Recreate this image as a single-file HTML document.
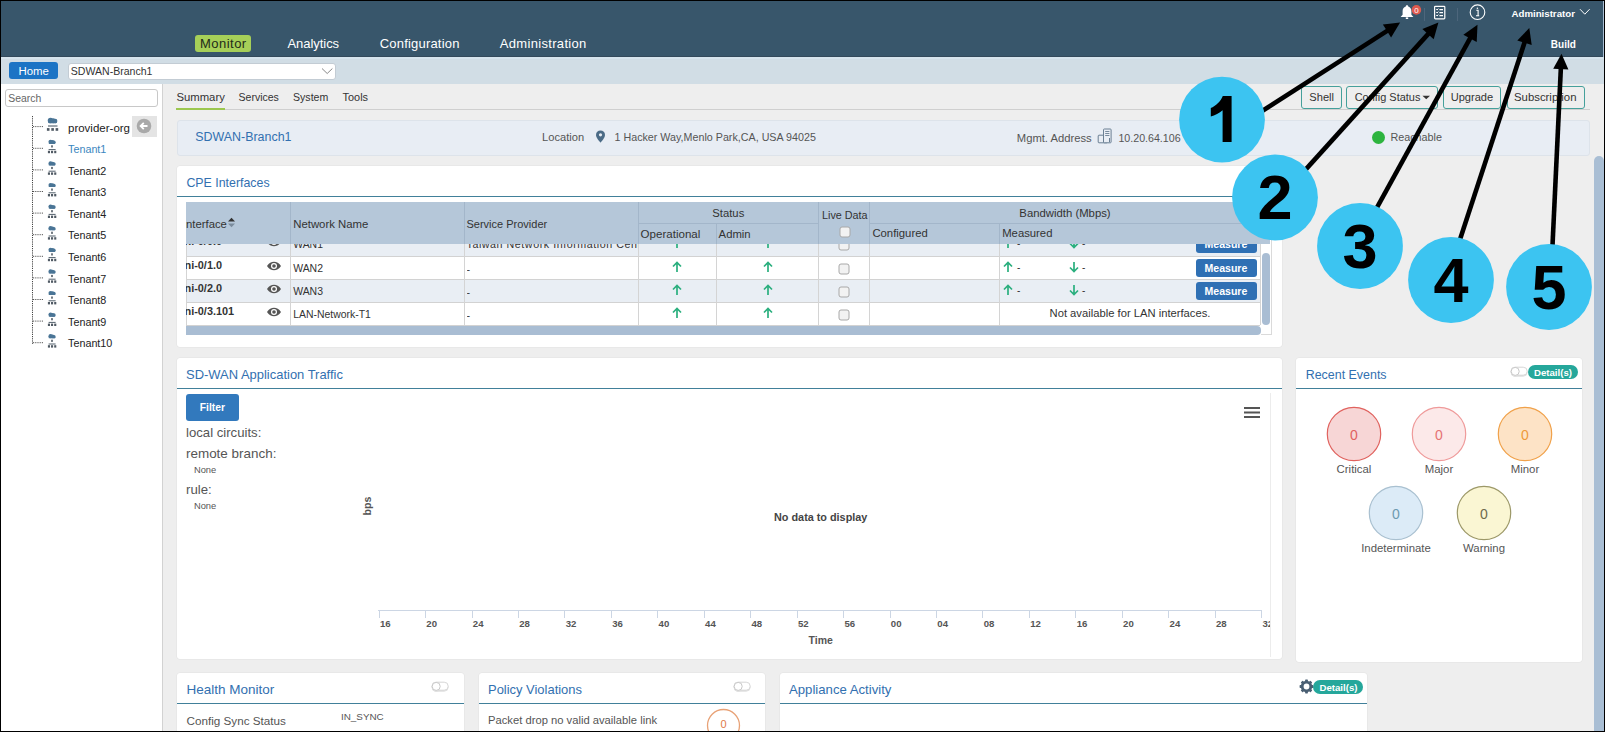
<!DOCTYPE html>
<html><head><meta charset="utf-8"><title>SD-WAN Monitor</title>
<style>
html,body{margin:0;padding:0;}
body{width:1605px;height:732px;overflow:hidden;position:relative;background:#eee;font-family:"Liberation Sans",sans-serif;}
.r{position:absolute;display:block;}
.t{position:absolute;white-space:nowrap;line-height:20px;height:20px;font-family:"Liberation Sans",sans-serif;}
svg{overflow:visible;}
</style></head><body>
<div class="r" style="left:0px;top:0px;width:1605px;height:57px;background:#38566b"></div>
<div class="r" style="left:0px;top:57px;width:1605px;height:27px;background:#d1dde5"></div>
<div class="r" style="left:0px;top:56px;width:1605px;height:1px;background:#33495b"></div>
<div class="r" style="left:0px;top:57px;width:1605px;height:2px;background:#d6e4ed"></div>
<div class="r" style="left:0px;top:84px;width:162px;height:648px;background:#fff"></div>
<div class="r" style="left:162px;top:84px;width:1px;height:648px;background:#d2d2d2"></div>
<div class="r" style="left:163px;top:84px;width:1442px;height:648px;background:#eeeeee"></div>
<div class="r" style="left:195px;top:35px;width:56px;height:17px;background:#a6cf58;border-radius:3px"></div>
<div class="t" style="left:200.00px;top:34.44px;font-size:13px;color:#1f2b18;font-weight:400;letter-spacing:0.47px">Monitor</div>
<div class="t" style="left:287.50px;top:34.44px;font-size:13px;color:#fff;font-weight:400;letter-spacing:-0.05px">Analytics</div>
<div class="t" style="left:379.70px;top:34.44px;font-size:13px;color:#fff;font-weight:400;letter-spacing:0.2px">Configuration</div>
<div class="t" style="left:499.70px;top:34.44px;font-size:13px;color:#fff;font-weight:400;letter-spacing:0.33px">Administration</div>
<svg class="r" style="left:1399px;top:4px;" width="16" height="17" viewBox="0 0 16 17"><path d="M8 1.2c-0.8 0-1.2 0.6-1.2 1.2C4.6 3 3.6 4.8 3.6 7.2v3.6L1.6 13h12.8l-2-2.2V7.2c0-2.4-1-4.2-3.2-4.8C9.2 1.8 8.8 1.2 8 1.2z" fill="#fff"/><rect x="6.8" y="13.4" width="2.4" height="1.6" fill="#fff"/></svg>
<svg class="r" style="left:1411px;top:5px;" width="11" height="10" viewBox="0 0 11 10"><circle cx="5.4" cy="4.9" r="4.8" fill="#e05a4e"/><text x="5.4" y="8" font-size="8" fill="#fff" text-anchor="middle" font-family="Liberation Sans">0</text></svg>
<div class="r" style="left:1423.5px;top:8px;width:0.7999999999999545px;height:13px;background:#4d667c"></div>
<svg class="r" style="left:1433px;top:5px;" width="14" height="16" viewBox="0 0 14 16"><rect x="1.6" y="1.3" width="10.2" height="12.6" rx="0.8" fill="none" stroke="#fff" stroke-width="1.2"/><path d="M3.2 4.2l0.9 0.8 1.2-1.4M3.2 7.2l0.9 0.8 1.2-1.4M3.2 10.2l0.9 0.8 1.2-1.4" stroke="#fff" stroke-width="1" fill="none"/><path d="M6.4 4.6h3.6M6.4 7.6h3.6M6.4 10.6h3.6" stroke="#fff" stroke-width="1.1"/></svg>
<div class="r" style="left:1456.5px;top:8px;width:0.7999999999999545px;height:13px;background:#4d667c"></div>
<svg class="r" style="left:1469px;top:4px;" width="17" height="17" viewBox="0 0 17 17"><circle cx="8.5" cy="8.2" r="7.3" fill="none" stroke="#fff" stroke-width="1.1"/><path d="M7.3 6.2h1.8v5.6M7 11.8h3.2" stroke="#fff" stroke-width="1.1" fill="none"/><circle cx="8.4" cy="4.2" r="0.8" fill="#fff"/></svg>
<div class="t" style="left:1511.50px;top:3.69px;font-size:9.69px;color:#fff;font-weight:700;">Administrator</div>
<svg class="r" style="left:1579px;top:8px;" width="12" height="8" viewBox="0 0 12 8"><path d="M1 1.2l4.8 5 4.8-5" stroke="#fff" stroke-width="1" fill="none"/></svg>
<div class="t" style="left:1550.80px;top:34.98px;font-size:10px;color:#fff;font-weight:700;">Build</div>
<div class="r" style="left:9px;top:62px;width:49px;height:17px;background:#1c74c5;border-radius:3px"></div>
<div class="t" style="left:18.50px;top:61.49px;font-size:11.43px;color:#fff;font-weight:400;">Home</div>
<div class="r" style="left:68px;top:62.5px;width:268px;height:17.0px;background:#fff;border:1px solid #c3ccd4;border-radius:3px;box-sizing:border-box"></div>
<div class="t" style="left:70.80px;top:60.79px;font-size:10.55px;color:#333;font-weight:400;">SDWAN-Branch1</div>
<svg class="r" style="left:321px;top:67px;" width="13" height="9" viewBox="0 0 13 9"><path d="M1 1.5l5.2 5 5.2-5" stroke="#888" stroke-width="1" fill="none"/></svg>
<div class="r" style="left:5px;top:89px;width:153px;height:18px;background:#fff;border:1px solid #c8c8c8;border-radius:3px;box-sizing:border-box"></div>
<div class="t" style="left:8.30px;top:88.84px;font-size:10.41px;color:#666;font-weight:400;">Search</div>
<div class="t" style="left:68.00px;top:117.86px;font-size:11.5px;color:#222;font-weight:400;">provider-org</div>
<div class="t" style="left:68.00px;top:138.91px;font-size:10.79px;color:#3a86c0;font-weight:400;">Tenant1</div>
<div class="t" style="left:68.00px;top:160.51px;font-size:10.79px;color:#222;font-weight:400;">Tenant2</div>
<div class="t" style="left:68.00px;top:182.11px;font-size:10.79px;color:#222;font-weight:400;">Tenant3</div>
<div class="t" style="left:68.00px;top:203.71px;font-size:10.79px;color:#222;font-weight:400;">Tenant4</div>
<div class="t" style="left:68.00px;top:225.31px;font-size:10.79px;color:#222;font-weight:400;">Tenant5</div>
<div class="t" style="left:68.00px;top:246.91px;font-size:10.79px;color:#222;font-weight:400;">Tenant6</div>
<div class="t" style="left:68.00px;top:268.51px;font-size:10.79px;color:#222;font-weight:400;">Tenant7</div>
<div class="t" style="left:68.00px;top:290.11px;font-size:10.79px;color:#222;font-weight:400;">Tenant8</div>
<div class="t" style="left:68.00px;top:311.71px;font-size:10.79px;color:#222;font-weight:400;">Tenant9</div>
<div class="t" style="left:68.00px;top:333.31px;font-size:10.79px;color:#222;font-weight:400;">Tenant10</div>
<svg class="r" style="left:0px;top:0px;" width="162" height="360" viewBox="0 0 162 360"><line x1="32.5" y1="116" x2="32.5" y2="344" stroke="#444" stroke-width="1" stroke-dasharray="1.2,1"/><line x1="33" y1="126.6" x2="43" y2="126.6" stroke="#555" stroke-width="1" stroke-dasharray="1.2,1"/><circle cx="50.52" cy="120.45" r="2.75" fill="#4a7596"/><circle cx="53.22" cy="120.70" r="2.50" fill="#4a7596"/><circle cx="55.20" cy="121.00" r="2.20" fill="#4a7596"/><rect x="48.00" y="120.95" width="9.00" height="2.25" rx="1.10" fill="#4a7596"/><path d="M48 126.0h9.5" stroke="#3d4d5a" stroke-width="1"/><rect x="46.9" y="128.1" width="2.6" height="2.7" fill="#505a64"/><rect x="51.3" y="128.1" width="2.6" height="2.7" fill="#505a64"/><rect x="55.6" y="128.1" width="2.6" height="2.7" fill="#505a64"/><line x1="33" y1="148.3" x2="43" y2="148.3" stroke="#555" stroke-width="1" stroke-dasharray="1.2,1"/><circle cx="50.55" cy="141.81" r="2.09" fill="#4a7596"/><circle cx="52.53" cy="142.00" r="1.90" fill="#4a7596"/><circle cx="53.98" cy="142.23" r="1.67" fill="#4a7596"/><rect x="48.70" y="142.19" width="6.60" height="1.71" rx="0.84" fill="#4a7596"/><rect x="51.2" y="145.3" width="1.6" height="2.2" fill="#505a64"/><path d="M48.6 149.6h7" stroke="#3d4d5a" stroke-width="0.9"/><rect x="47.9" y="150.8" width="2.1" height="2.4" fill="#505a64"/><rect x="51.0" y="150.8" width="2.1" height="2.4" fill="#505a64"/><rect x="54.2" y="150.8" width="2.1" height="2.4" fill="#505a64"/><line x1="33" y1="169.9" x2="43" y2="169.9" stroke="#555" stroke-width="1" stroke-dasharray="1.2,1"/><circle cx="50.55" cy="163.41" r="2.09" fill="#4a7596"/><circle cx="52.53" cy="163.60" r="1.90" fill="#4a7596"/><circle cx="53.98" cy="163.83" r="1.67" fill="#4a7596"/><rect x="48.70" y="163.79" width="6.60" height="1.71" rx="0.84" fill="#4a7596"/><rect x="51.2" y="166.9" width="1.6" height="2.2" fill="#505a64"/><path d="M48.6 171.2h7" stroke="#3d4d5a" stroke-width="0.9"/><rect x="47.9" y="172.4" width="2.1" height="2.4" fill="#505a64"/><rect x="51.0" y="172.4" width="2.1" height="2.4" fill="#505a64"/><rect x="54.2" y="172.4" width="2.1" height="2.4" fill="#505a64"/><line x1="33" y1="191.5" x2="43" y2="191.5" stroke="#555" stroke-width="1" stroke-dasharray="1.2,1"/><circle cx="50.55" cy="185.01" r="2.09" fill="#4a7596"/><circle cx="52.53" cy="185.20" r="1.90" fill="#4a7596"/><circle cx="53.98" cy="185.43" r="1.67" fill="#4a7596"/><rect x="48.70" y="185.39" width="6.60" height="1.71" rx="0.84" fill="#4a7596"/><rect x="51.2" y="188.5" width="1.6" height="2.2" fill="#505a64"/><path d="M48.6 192.8h7" stroke="#3d4d5a" stroke-width="0.9"/><rect x="47.9" y="194.0" width="2.1" height="2.4" fill="#505a64"/><rect x="51.0" y="194.0" width="2.1" height="2.4" fill="#505a64"/><rect x="54.2" y="194.0" width="2.1" height="2.4" fill="#505a64"/><line x1="33" y1="213.1" x2="43" y2="213.1" stroke="#555" stroke-width="1" stroke-dasharray="1.2,1"/><circle cx="50.55" cy="206.61" r="2.09" fill="#4a7596"/><circle cx="52.53" cy="206.80" r="1.90" fill="#4a7596"/><circle cx="53.98" cy="207.03" r="1.67" fill="#4a7596"/><rect x="48.70" y="206.99" width="6.60" height="1.71" rx="0.84" fill="#4a7596"/><rect x="51.2" y="210.1" width="1.6" height="2.2" fill="#505a64"/><path d="M48.6 214.4h7" stroke="#3d4d5a" stroke-width="0.9"/><rect x="47.9" y="215.6" width="2.1" height="2.4" fill="#505a64"/><rect x="51.0" y="215.6" width="2.1" height="2.4" fill="#505a64"/><rect x="54.2" y="215.6" width="2.1" height="2.4" fill="#505a64"/><line x1="33" y1="234.7" x2="43" y2="234.7" stroke="#555" stroke-width="1" stroke-dasharray="1.2,1"/><circle cx="50.55" cy="228.21" r="2.09" fill="#4a7596"/><circle cx="52.53" cy="228.40" r="1.90" fill="#4a7596"/><circle cx="53.98" cy="228.63" r="1.67" fill="#4a7596"/><rect x="48.70" y="228.59" width="6.60" height="1.71" rx="0.84" fill="#4a7596"/><rect x="51.2" y="231.7" width="1.6" height="2.2" fill="#505a64"/><path d="M48.6 236.0h7" stroke="#3d4d5a" stroke-width="0.9"/><rect x="47.9" y="237.2" width="2.1" height="2.4" fill="#505a64"/><rect x="51.0" y="237.2" width="2.1" height="2.4" fill="#505a64"/><rect x="54.2" y="237.2" width="2.1" height="2.4" fill="#505a64"/><line x1="33" y1="256.3" x2="43" y2="256.3" stroke="#555" stroke-width="1" stroke-dasharray="1.2,1"/><circle cx="50.55" cy="249.81" r="2.09" fill="#4a7596"/><circle cx="52.53" cy="250.00" r="1.90" fill="#4a7596"/><circle cx="53.98" cy="250.23" r="1.67" fill="#4a7596"/><rect x="48.70" y="250.19" width="6.60" height="1.71" rx="0.84" fill="#4a7596"/><rect x="51.2" y="253.3" width="1.6" height="2.2" fill="#505a64"/><path d="M48.6 257.6h7" stroke="#3d4d5a" stroke-width="0.9"/><rect x="47.9" y="258.8" width="2.1" height="2.4" fill="#505a64"/><rect x="51.0" y="258.8" width="2.1" height="2.4" fill="#505a64"/><rect x="54.2" y="258.8" width="2.1" height="2.4" fill="#505a64"/><line x1="33" y1="277.9" x2="43" y2="277.9" stroke="#555" stroke-width="1" stroke-dasharray="1.2,1"/><circle cx="50.55" cy="271.41" r="2.09" fill="#4a7596"/><circle cx="52.53" cy="271.60" r="1.90" fill="#4a7596"/><circle cx="53.98" cy="271.83" r="1.67" fill="#4a7596"/><rect x="48.70" y="271.79" width="6.60" height="1.71" rx="0.84" fill="#4a7596"/><rect x="51.2" y="274.9" width="1.6" height="2.2" fill="#505a64"/><path d="M48.6 279.2h7" stroke="#3d4d5a" stroke-width="0.9"/><rect x="47.9" y="280.4" width="2.1" height="2.4" fill="#505a64"/><rect x="51.0" y="280.4" width="2.1" height="2.4" fill="#505a64"/><rect x="54.2" y="280.4" width="2.1" height="2.4" fill="#505a64"/><line x1="33" y1="299.5" x2="43" y2="299.5" stroke="#555" stroke-width="1" stroke-dasharray="1.2,1"/><circle cx="50.55" cy="293.01" r="2.09" fill="#4a7596"/><circle cx="52.53" cy="293.20" r="1.90" fill="#4a7596"/><circle cx="53.98" cy="293.43" r="1.67" fill="#4a7596"/><rect x="48.70" y="293.39" width="6.60" height="1.71" rx="0.84" fill="#4a7596"/><rect x="51.2" y="296.5" width="1.6" height="2.2" fill="#505a64"/><path d="M48.6 300.8h7" stroke="#3d4d5a" stroke-width="0.9"/><rect x="47.9" y="302.0" width="2.1" height="2.4" fill="#505a64"/><rect x="51.0" y="302.0" width="2.1" height="2.4" fill="#505a64"/><rect x="54.2" y="302.0" width="2.1" height="2.4" fill="#505a64"/><line x1="33" y1="321.1" x2="43" y2="321.1" stroke="#555" stroke-width="1" stroke-dasharray="1.2,1"/><circle cx="50.55" cy="314.61" r="2.09" fill="#4a7596"/><circle cx="52.53" cy="314.80" r="1.90" fill="#4a7596"/><circle cx="53.98" cy="315.03" r="1.67" fill="#4a7596"/><rect x="48.70" y="314.99" width="6.60" height="1.71" rx="0.84" fill="#4a7596"/><rect x="51.2" y="318.1" width="1.6" height="2.2" fill="#505a64"/><path d="M48.6 322.4h7" stroke="#3d4d5a" stroke-width="0.9"/><rect x="47.9" y="323.6" width="2.1" height="2.4" fill="#505a64"/><rect x="51.0" y="323.6" width="2.1" height="2.4" fill="#505a64"/><rect x="54.2" y="323.6" width="2.1" height="2.4" fill="#505a64"/><line x1="33" y1="342.7" x2="43" y2="342.7" stroke="#555" stroke-width="1" stroke-dasharray="1.2,1"/><circle cx="50.55" cy="336.21" r="2.09" fill="#4a7596"/><circle cx="52.53" cy="336.40" r="1.90" fill="#4a7596"/><circle cx="53.98" cy="336.63" r="1.67" fill="#4a7596"/><rect x="48.70" y="336.59" width="6.60" height="1.71" rx="0.84" fill="#4a7596"/><rect x="51.2" y="339.7" width="1.6" height="2.2" fill="#505a64"/><path d="M48.6 344.0h7" stroke="#3d4d5a" stroke-width="0.9"/><rect x="47.9" y="345.2" width="2.1" height="2.4" fill="#505a64"/><rect x="51.0" y="345.2" width="2.1" height="2.4" fill="#505a64"/><rect x="54.2" y="345.2" width="2.1" height="2.4" fill="#505a64"/></svg>
<div class="r" style="left:132px;top:116px;width:25px;height:21px;background:#e4e4e4"></div>
<svg class="r" style="left:136px;top:118px;" width="17" height="17" viewBox="0 0 17 17"><circle cx="8" cy="8" r="7.3" fill="#a9a9a9"/><path d="M11.5 8H4.8M7.8 4.8L4.6 8l3.2 3.2" stroke="#fff" stroke-width="1.8" fill="none"/></svg>
<div class="t" style="left:176.40px;top:87.42px;font-size:11.34px;color:#333;font-weight:400;">Summary</div>
<div class="t" style="left:238.50px;top:86.70px;font-size:10.54px;color:#333;font-weight:400;">Services</div>
<div class="t" style="left:293.00px;top:86.68px;font-size:10.59px;color:#333;font-weight:400;">System</div>
<div class="t" style="left:342.60px;top:86.56px;font-size:10.92px;color:#333;font-weight:400;">Tools</div>
<div class="r" style="left:176px;top:109px;width:1414px;height:1px;background:#cfcfcf"></div>
<div class="r" style="left:176px;top:108px;width:49px;height:2px;background:#9cc74f"></div>
<div class="r" style="left:1301px;top:86px;width:41px;height:23px;border:1px solid #45a09b;border-radius:3px;box-sizing:border-box"></div>
<div class="t" style="left:1309.30px;top:86.50px;font-size:11.11px;color:#333;font-weight:400;">Shell</div>
<div class="r" style="left:1346px;top:86px;width:92px;height:23px;border:1px solid #45a09b;border-radius:3px;box-sizing:border-box"></div>
<div class="t" style="left:1354.70px;top:86.56px;font-size:10.94px;color:#333;font-weight:400;">Config Status</div>
<div class="r" style="left:1442.5px;top:86px;width:58.0px;height:23px;border:1px solid #45a09b;border-radius:3px;box-sizing:border-box"></div>
<div class="t" style="left:1450.70px;top:86.51px;font-size:11.08px;color:#333;font-weight:400;">Upgrade</div>
<div class="r" style="left:1506.5px;top:86px;width:78.0px;height:23px;border:1px solid #45a09b;border-radius:3px;box-sizing:border-box"></div>
<div class="t" style="left:1514.00px;top:87.41px;font-size:11.36px;color:#333;font-weight:400;">Subscription</div>
<svg class="r" style="left:1422px;top:95px;" width="9" height="5" viewBox="0 0 9 5"><path d="M0.5 0.8h7.5L4.25 4.3z" fill="#333"/></svg>
<div class="r" style="left:176.5px;top:119.5px;width:1413.5px;height:36.0px;background:#e8edf4;border:1px solid #dde3ea;border-radius:3px;box-sizing:border-box"></div>
<div class="t" style="left:195.20px;top:127.34px;font-size:12.44px;color:#3270b0;font-weight:400;">SDWAN-Branch1</div>
<div class="t" style="left:542.10px;top:127.20px;font-size:11.11px;color:#555;font-weight:400;">Location</div>
<svg class="r" style="left:595px;top:130px;" width="12" height="13" viewBox="0 0 12 13"><path d="M5.5 0.6C2.9 0.6 1 2.5 1 4.9c0 3 4.5 7.6 4.5 7.6S10 7.9 10 4.9C10 2.5 8.1 0.6 5.5 0.6z" fill="#4b6b86"/><circle cx="5.5" cy="4.8" r="1.6" fill="#e8edf4"/></svg>
<div class="t" style="left:614.50px;top:127.33px;font-size:10.73px;color:#555;font-weight:400;">1 Hacker Way,Menlo Park,CA, USA 94025</div>
<div class="t" style="left:1016.80px;top:128.36px;font-size:11.22px;color:#555;font-weight:400;">Mgmt. Address</div>
<svg class="r" style="left:1097px;top:128px;" width="16" height="16" viewBox="0 0 16 16"><rect x="1.2" y="7.2" width="9" height="7.6" rx="0.8" fill="none" stroke="#6a7f93" stroke-width="1"/><rect x="6.5" y="1" width="7.6" height="13.8" rx="0.8" fill="#e8edf4" stroke="#6a7f93" stroke-width="1"/><path d="M8.2 3.5h4.2M8.2 5.5h4.2M8.2 7.5h4.2" stroke="#6a7f93" stroke-width="0.9"/><path d="M12.5 10v4" stroke="#6a7f93" stroke-width="1"/></svg>
<div class="t" style="left:1118.40px;top:127.55px;font-size:10.67px;color:#555;font-weight:400;">10.20.64.106</div>
<svg class="r" style="left:1372px;top:131px;" width="13" height="13" viewBox="0 0 13 13"><circle cx="6.5" cy="6.5" r="6.5" fill="#2db43f"/></svg>
<div class="t" style="left:1390.40px;top:126.51px;font-size:10.79px;color:#555;font-weight:400;">Reachable</div>
<div class="r" style="left:177px;top:166px;width:1105px;height:180.5px;background:#fff;border-radius:3px;box-shadow:0 0 0 0.5px #e2e2e2"></div>
<div class="t" style="left:186.40px;top:173.25px;font-size:12.39px;color:#3270b0;font-weight:400;">CPE Interfaces</div>
<div class="r" style="left:177px;top:196px;width:1105px;height:1.1999999999999886px;background:#41809a"></div>
<div class="r" style="left:186px;top:233px;width:1074px;height:23px;background:#e9eef4"></div>
<div class="r" style="left:186px;top:256px;width:1074px;height:23px;background:#fff"></div>
<div class="r" style="left:186px;top:279px;width:1074px;height:23px;background:#e9eef4"></div>
<div class="r" style="left:186px;top:302px;width:1074px;height:23px;background:#fff"></div>
<div class="r" style="left:186px;top:256px;width:1074px;height:1px;background:#d2d2d2"></div>
<div class="r" style="left:186px;top:279px;width:1074px;height:1px;background:#d2d2d2"></div>
<div class="r" style="left:186px;top:302px;width:1074px;height:1px;background:#d2d2d2"></div>
<div class="r" style="left:186px;top:325px;width:1074px;height:1px;background:#d2d2d2"></div>
<div class="r" style="left:290px;top:243px;width:1px;height:82px;background:#d4d4d4"></div>
<div class="r" style="left:464px;top:243px;width:1px;height:82px;background:#d4d4d4"></div>
<div class="r" style="left:638px;top:243px;width:1px;height:82px;background:#d4d4d4"></div>
<div class="r" style="left:716px;top:243px;width:1px;height:82px;background:#d4d4d4"></div>
<div class="r" style="left:818px;top:243px;width:1px;height:82px;background:#d4d4d4"></div>
<div class="r" style="left:869px;top:243px;width:1px;height:82px;background:#d4d4d4"></div>
<div class="r" style="left:999px;top:243px;width:1px;height:82px;background:#d4d4d4"></div>
<div class="r" style="left:186px;top:243px;width:1px;height:82px;background:#d4d4d4"></div>
<div class="r" style="left:1260px;top:243px;width:1px;height:82px;background:#d4d4d4"></div>
<div class="r" style="left:186px;top:243px;width:1074px;height:82px;overflow:hidden">
<div class="t" style="left:-1.50px;top:-12.03px;font-size:10.9px;color:#333;font-weight:700;">ni-0/0.0</div>
<svg class="r" style="left:80px;top:-6.0px;" width="16" height="10" viewBox="0 0 16 10"><path d="M1 5C3 1.8 5.3 0.8 8 0.8S13 1.8 15 5C13 8.2 10.7 9.2 8 9.2S3 8.2 1 5z" fill="#555"/><circle cx="8" cy="5" r="3" fill="#fff"/><circle cx="8" cy="5" r="1.8" fill="#555"/></svg>
<div class="t" style="left:107.20px;top:-7.87px;font-size:10.45px;color:#333;font-weight:400;">WAN1</div>
<div class="t" style="left:280.5px;top:-8.91px;width:171.5px;overflow:hidden;font-size:10.7px;color:#333;letter-spacing:0.55px;">Taiwan Network Information Center</div>
<svg class="r" style="left:486px;top:-6px;" width="10" height="12" viewBox="0 0 10 12"><path d="M5 11V1.5M1 5.5L5 1.5l4 4" stroke="#2aaf7e" stroke-width="1.7" fill="none"/></svg>
<svg class="r" style="left:577px;top:-6px;" width="10" height="12" viewBox="0 0 10 12"><path d="M5 11V1.5M1 5.5L5 1.5l4 4" stroke="#2aaf7e" stroke-width="1.7" fill="none"/></svg>
<svg class="r" style="left:652px;top:-4.0px;" width="12" height="12" viewBox="0 0 12 12"><rect x="1" y="1" width="10" height="10" rx="2" fill="#f2f2f2" stroke="#a8a8a8" stroke-width="1"/></svg>
<svg class="r" style="left:817px;top:-6.0px;" width="10" height="12" viewBox="0 0 10 12"><path d="M5 11V1.5M1 5.5L5 1.5l4 4" stroke="#2aaf7e" stroke-width="1.7" fill="none"/></svg>
<div class="t" style="left:831.00px;top:-9.02px;font-size:10px;color:#333;font-weight:400;">-</div>
<svg class="r" style="left:883px;top:-6.0px;" width="10" height="12" viewBox="0 0 10 12"><path d="M5 1v9.5M1 6.5L5 10.5l4-4" stroke="#2aaf7e" stroke-width="1.7" fill="none"/></svg>
<div class="t" style="left:896.00px;top:-9.02px;font-size:10px;color:#333;font-weight:400;">-</div>
<div class="r" style="left:1010px;top:-7.6px;width:61px;height:17.2px;background:#2f70b4;border-radius:3px"></div>
<div class="t" style="left:1018.50px;top:-8.61px;font-size:10.55px;color:#fff;font-weight:700;">Measure</div>
<div class="t" style="left:-1.50px;top:11.97px;font-size:10.9px;color:#333;font-weight:700;">ni-0/1.0</div>
<svg class="r" style="left:80px;top:18px;" width="16" height="10" viewBox="0 0 16 10"><path d="M1 5C3 1.8 5.3 0.8 8 0.8S13 1.8 15 5C13 8.2 10.7 9.2 8 9.2S3 8.2 1 5z" fill="#555"/><circle cx="8" cy="5" r="3" fill="#fff"/><circle cx="8" cy="5" r="1.8" fill="#555"/></svg>
<div class="t" style="left:107.20px;top:16.13px;font-size:10.45px;color:#333;font-weight:400;">WAN2</div>
<div class="t" style="left:280.5px;top:15.59px;width:171.5px;overflow:hidden;font-size:10.7px;color:#333;">-</div>
<svg class="r" style="left:486px;top:18px;" width="10" height="12" viewBox="0 0 10 12"><path d="M5 11V1.5M1 5.5L5 1.5l4 4" stroke="#2aaf7e" stroke-width="1.7" fill="none"/></svg>
<svg class="r" style="left:577px;top:18px;" width="10" height="12" viewBox="0 0 10 12"><path d="M5 11V1.5M1 5.5L5 1.5l4 4" stroke="#2aaf7e" stroke-width="1.7" fill="none"/></svg>
<svg class="r" style="left:652px;top:20px;" width="12" height="12" viewBox="0 0 12 12"><rect x="1" y="1" width="10" height="10" rx="2" fill="#f2f2f2" stroke="#a8a8a8" stroke-width="1"/></svg>
<svg class="r" style="left:817px;top:18px;" width="10" height="12" viewBox="0 0 10 12"><path d="M5 11V1.5M1 5.5L5 1.5l4 4" stroke="#2aaf7e" stroke-width="1.7" fill="none"/></svg>
<div class="t" style="left:831.00px;top:14.98px;font-size:10px;color:#333;font-weight:400;">-</div>
<svg class="r" style="left:883px;top:18px;" width="10" height="12" viewBox="0 0 10 12"><path d="M5 1v9.5M1 6.5L5 10.5l4-4" stroke="#2aaf7e" stroke-width="1.7" fill="none"/></svg>
<div class="t" style="left:896.00px;top:14.98px;font-size:10px;color:#333;font-weight:400;">-</div>
<div class="r" style="left:1010px;top:16.4px;width:61px;height:17.2px;background:#2f70b4;border-radius:3px"></div>
<div class="t" style="left:1018.50px;top:15.39px;font-size:10.55px;color:#fff;font-weight:700;">Measure</div>
<div class="t" style="left:-1.50px;top:34.97px;font-size:10.9px;color:#333;font-weight:700;">ni-0/2.0</div>
<svg class="r" style="left:80px;top:41px;" width="16" height="10" viewBox="0 0 16 10"><path d="M1 5C3 1.8 5.3 0.8 8 0.8S13 1.8 15 5C13 8.2 10.7 9.2 8 9.2S3 8.2 1 5z" fill="#555"/><circle cx="8" cy="5" r="3" fill="#fff"/><circle cx="8" cy="5" r="1.8" fill="#555"/></svg>
<div class="t" style="left:107.20px;top:39.13px;font-size:10.45px;color:#333;font-weight:400;">WAN3</div>
<div class="t" style="left:280.5px;top:38.59px;width:171.5px;overflow:hidden;font-size:10.7px;color:#333;">-</div>
<svg class="r" style="left:486px;top:41px;" width="10" height="12" viewBox="0 0 10 12"><path d="M5 11V1.5M1 5.5L5 1.5l4 4" stroke="#2aaf7e" stroke-width="1.7" fill="none"/></svg>
<svg class="r" style="left:577px;top:41px;" width="10" height="12" viewBox="0 0 10 12"><path d="M5 11V1.5M1 5.5L5 1.5l4 4" stroke="#2aaf7e" stroke-width="1.7" fill="none"/></svg>
<svg class="r" style="left:652px;top:43px;" width="12" height="12" viewBox="0 0 12 12"><rect x="1" y="1" width="10" height="10" rx="2" fill="#f2f2f2" stroke="#a8a8a8" stroke-width="1"/></svg>
<svg class="r" style="left:817px;top:41px;" width="10" height="12" viewBox="0 0 10 12"><path d="M5 11V1.5M1 5.5L5 1.5l4 4" stroke="#2aaf7e" stroke-width="1.7" fill="none"/></svg>
<div class="t" style="left:831.00px;top:37.98px;font-size:10px;color:#333;font-weight:400;">-</div>
<svg class="r" style="left:883px;top:41px;" width="10" height="12" viewBox="0 0 10 12"><path d="M5 1v9.5M1 6.5L5 10.5l4-4" stroke="#2aaf7e" stroke-width="1.7" fill="none"/></svg>
<div class="t" style="left:896.00px;top:37.98px;font-size:10px;color:#333;font-weight:400;">-</div>
<div class="r" style="left:1010px;top:39.4px;width:61px;height:17.2px;background:#2f70b4;border-radius:3px"></div>
<div class="t" style="left:1018.50px;top:38.39px;font-size:10.55px;color:#fff;font-weight:700;">Measure</div>
<div class="t" style="left:-1.50px;top:57.97px;font-size:10.9px;color:#333;font-weight:700;">ni-0/3.101</div>
<svg class="r" style="left:80px;top:64px;" width="16" height="10" viewBox="0 0 16 10"><path d="M1 5C3 1.8 5.3 0.8 8 0.8S13 1.8 15 5C13 8.2 10.7 9.2 8 9.2S3 8.2 1 5z" fill="#555"/><circle cx="8" cy="5" r="3" fill="#fff"/><circle cx="8" cy="5" r="1.8" fill="#555"/></svg>
<div class="t" style="left:107.20px;top:62.13px;font-size:10.45px;color:#333;font-weight:400;">LAN-Network-T1</div>
<div class="t" style="left:280.5px;top:61.59px;width:171.5px;overflow:hidden;font-size:10.7px;color:#333;">-</div>
<svg class="r" style="left:486px;top:64px;" width="10" height="12" viewBox="0 0 10 12"><path d="M5 11V1.5M1 5.5L5 1.5l4 4" stroke="#2aaf7e" stroke-width="1.7" fill="none"/></svg>
<svg class="r" style="left:577px;top:64px;" width="10" height="12" viewBox="0 0 10 12"><path d="M5 11V1.5M1 5.5L5 1.5l4 4" stroke="#2aaf7e" stroke-width="1.7" fill="none"/></svg>
<svg class="r" style="left:652px;top:66px;" width="12" height="12" viewBox="0 0 12 12"><rect x="1" y="1" width="10" height="10" rx="2" fill="#f2f2f2" stroke="#a8a8a8" stroke-width="1"/></svg>
<div class="t" style="left:814.00px;width:260px;text-align:center;top:60.36px;font-size:11.23px;color:#333;font-weight:400;">Not available for LAN interfaces.</div>
</div>
<div class="r" style="left:186px;top:202px;width:1084px;height:41.5px;background:#b5c7d9"></div>
<div class="r" style="left:290px;top:202px;width:1px;height:41.5px;background:#a3b6ca"></div>
<div class="r" style="left:464px;top:202px;width:1px;height:41.5px;background:#a3b6ca"></div>
<div class="r" style="left:638px;top:202px;width:1px;height:41.5px;background:#a3b6ca"></div>
<div class="r" style="left:818px;top:202px;width:1px;height:41.5px;background:#a3b6ca"></div>
<div class="r" style="left:869px;top:202px;width:1px;height:41.5px;background:#a3b6ca"></div>
<div class="r" style="left:716px;top:223px;width:1px;height:20.5px;background:#a3b6ca"></div>
<div class="r" style="left:999px;top:223px;width:1px;height:20.5px;background:#a3b6ca"></div>
<div class="r" style="left:638px;top:222.5px;width:180px;height:1.0px;background:#a3b6ca"></div>
<div class="r" style="left:869.5px;top:222.5px;width:400.5px;height:1.0px;background:#a3b6ca"></div>
<div class="r" style="left:186px;top:202px;width:104px;height:41px;overflow:hidden">
<div class="t" style="left:-3.10px;top:11.83px;font-size:11.3px;color:#333;font-weight:400;">Interface</div>
</div>
<svg class="r" style="left:227px;top:217px;" width="9" height="12" viewBox="0 0 9 12"><path d="M1 4.5L4.5 0.8 8 4.5z" fill="#333"/><path d="M1 6.5L4.5 10.2 8 6.5z" fill="#7b8c9d"/></svg>
<div class="t" style="left:293.20px;top:213.80px;font-size:11.39px;color:#333;font-weight:400;">Network Name</div>
<div class="t" style="left:466.50px;top:213.84px;font-size:11.0px;color:#333;font-weight:400;">Service Provider</div>
<div class="t" style="left:638.30px;width:180px;text-align:center;top:203.34px;font-size:11.29px;color:#333;font-weight:400;">Status</div>
<div class="t" style="left:640.60px;top:223.65px;font-size:11.55px;color:#333;font-weight:400;">Operational</div>
<div class="t" style="left:718.60px;top:223.73px;font-size:11.3px;color:#333;font-weight:400;">Admin</div>
<div class="t" style="left:822.00px;top:205.01px;font-size:10.79px;color:#333;font-weight:400;">Live Data</div>
<svg class="r" style="left:838.5px;top:226px;" width="12" height="12" viewBox="0 0 12 12"><rect x="1" y="1" width="10" height="10" rx="2" fill="#f2f2f2" stroke="#a8a8a8" stroke-width="1"/></svg>
<div class="t" style="left:915.00px;width:300px;text-align:center;top:203.02px;font-size:11.34px;color:#333;font-weight:400;">Bandwidth (Mbps)</div>
<div class="t" style="left:872.40px;top:222.53px;font-size:11.32px;color:#333;font-weight:400;">Configured</div>
<div class="t" style="left:1002.20px;top:222.53px;font-size:11.31px;color:#333;font-weight:400;">Measured</div>
<div class="r" style="left:186px;top:325.5px;width:1075px;height:9.300000000000011px;background:#a9bdd3;border-radius:0 4px 4px 0"></div>
<div class="r" style="left:1261.5px;top:253px;width:8.5px;height:72px;background:#a9bdd3;border-radius:4px"></div>
<div class="r" style="left:1270.5px;top:202px;width:1.0px;height:132.5px;background:#dadada"></div>
<div class="r" style="left:1261px;top:334px;width:10.5px;height:1px;background:#dadada"></div>
<div class="r" style="left:177px;top:358px;width:1105px;height:301px;background:#fff;border-radius:3px;box-shadow:0 0 0 0.5px #e2e2e2"></div>
<div class="t" style="left:186.00px;top:365.26px;font-size:12.96px;color:#3270b0;font-weight:400;">SD-WAN Application Traffic</div>
<div class="r" style="left:177px;top:388px;width:1105px;height:1.1999999999999886px;background:#41809a"></div>
<div class="r" style="left:186px;top:394px;width:53px;height:27px;background:#3279bd;border-radius:3px"></div>
<div class="t" style="left:199.80px;top:397.88px;font-size:10.31px;color:#fff;font-weight:700;">Filter</div>
<div class="t" style="left:186.00px;top:422.88px;font-size:13.17px;color:#555;font-weight:400;">local circuits:</div>
<div class="t" style="left:186.00px;top:443.79px;font-size:13.44px;color:#555;font-weight:400;">remote branch:</div>
<div class="t" style="left:193.90px;top:459.92px;font-size:9.33px;color:#555;font-weight:400;">None</div>
<div class="t" style="left:186.00px;top:479.87px;font-size:13.2px;color:#555;font-weight:400;">rule:</div>
<div class="t" style="left:193.90px;top:496.22px;font-size:9.33px;color:#555;font-weight:400;">None</div>
<div class="t" style="left:346.8px;top:496px;width:40px;text-align:center;font-size:10.6px;font-weight:700;color:#555;transform:rotate(-90deg);transform-origin:20px 10px">bps</div>
<div class="t" style="left:670.70px;width:300px;text-align:center;top:506.70px;font-size:10.83px;color:#444;font-weight:700;">No data to display</div>
<div class="r" style="left:1270px;top:393px;width:1px;height:264px;background:#ececec"></div>
<svg class="r" style="left:1243px;top:406px;" width="19" height="14" viewBox="0 0 19 14"><path d="M1 2h16M1 6.5h16M1 11h16" stroke="#555" stroke-width="2.2"/></svg>
<div class="r" style="left:378px;top:610px;width:884px;height:1px;background:#ccd6e4"></div>
<div class="r" style="left:370px;top:600px;width:900px;height:50px;overflow:hidden">
<div class="r" style="left:9px;top:10px;width:1px;height:8px;background:#ccd6e4"></div>
<div class="t" style="left:9.90px;top:14.11px;font-size:9.62px;color:#555;font-weight:700;">16</div>
<div class="r" style="left:55px;top:10px;width:1px;height:8px;background:#ccd6e4"></div>
<div class="t" style="left:56.35px;top:14.11px;font-size:9.62px;color:#555;font-weight:700;">20</div>
<div class="r" style="left:102px;top:10px;width:1px;height:8px;background:#ccd6e4"></div>
<div class="t" style="left:102.80px;top:14.11px;font-size:9.62px;color:#555;font-weight:700;">24</div>
<div class="r" style="left:148px;top:10px;width:1px;height:8px;background:#ccd6e4"></div>
<div class="t" style="left:149.25px;top:14.11px;font-size:9.62px;color:#555;font-weight:700;">28</div>
<div class="r" style="left:194px;top:10px;width:1px;height:8px;background:#ccd6e4"></div>
<div class="t" style="left:195.70px;top:14.11px;font-size:9.62px;color:#555;font-weight:700;">32</div>
<div class="r" style="left:241px;top:10px;width:1px;height:8px;background:#ccd6e4"></div>
<div class="t" style="left:242.15px;top:14.11px;font-size:9.62px;color:#555;font-weight:700;">36</div>
<div class="r" style="left:287px;top:10px;width:1px;height:8px;background:#ccd6e4"></div>
<div class="t" style="left:288.60px;top:14.11px;font-size:9.62px;color:#555;font-weight:700;">40</div>
<div class="r" style="left:334px;top:10px;width:1px;height:8px;background:#ccd6e4"></div>
<div class="t" style="left:335.05px;top:14.11px;font-size:9.62px;color:#555;font-weight:700;">44</div>
<div class="r" style="left:380px;top:10px;width:1px;height:8px;background:#ccd6e4"></div>
<div class="t" style="left:381.50px;top:14.11px;font-size:9.62px;color:#555;font-weight:700;">48</div>
<div class="r" style="left:427px;top:10px;width:1px;height:8px;background:#ccd6e4"></div>
<div class="t" style="left:427.95px;top:14.11px;font-size:9.62px;color:#555;font-weight:700;">52</div>
<div class="r" style="left:473px;top:10px;width:1px;height:8px;background:#ccd6e4"></div>
<div class="t" style="left:474.40px;top:14.11px;font-size:9.62px;color:#555;font-weight:700;">56</div>
<div class="r" style="left:520px;top:10px;width:1px;height:8px;background:#ccd6e4"></div>
<div class="t" style="left:520.85px;top:14.11px;font-size:9.62px;color:#555;font-weight:700;">00</div>
<div class="r" style="left:566px;top:10px;width:1px;height:8px;background:#ccd6e4"></div>
<div class="t" style="left:567.30px;top:14.11px;font-size:9.62px;color:#555;font-weight:700;">04</div>
<div class="r" style="left:612px;top:10px;width:1px;height:8px;background:#ccd6e4"></div>
<div class="t" style="left:613.75px;top:14.11px;font-size:9.62px;color:#555;font-weight:700;">08</div>
<div class="r" style="left:659px;top:10px;width:1px;height:8px;background:#ccd6e4"></div>
<div class="t" style="left:660.20px;top:14.11px;font-size:9.62px;color:#555;font-weight:700;">12</div>
<div class="r" style="left:705px;top:10px;width:1px;height:8px;background:#ccd6e4"></div>
<div class="t" style="left:706.65px;top:14.11px;font-size:9.62px;color:#555;font-weight:700;">16</div>
<div class="r" style="left:752px;top:10px;width:1px;height:8px;background:#ccd6e4"></div>
<div class="t" style="left:753.10px;top:14.11px;font-size:9.62px;color:#555;font-weight:700;">20</div>
<div class="r" style="left:798px;top:10px;width:1px;height:8px;background:#ccd6e4"></div>
<div class="t" style="left:799.55px;top:14.11px;font-size:9.62px;color:#555;font-weight:700;">24</div>
<div class="r" style="left:845px;top:10px;width:1px;height:8px;background:#ccd6e4"></div>
<div class="t" style="left:846.00px;top:14.11px;font-size:9.62px;color:#555;font-weight:700;">28</div>
<div class="r" style="left:891px;top:10px;width:1px;height:8px;background:#ccd6e4"></div>
<div class="t" style="left:892.45px;top:14.11px;font-size:9.62px;color:#555;font-weight:700;">32</div>
</div>
<div class="t" style="left:770.70px;width:100px;text-align:center;top:629.61px;font-size:10.5px;color:#555;font-weight:700;">Time</div>
<div class="r" style="left:1296px;top:358px;width:286px;height:304px;background:#fff;border-radius:3px;box-shadow:0 0 0 0.5px #e2e2e2"></div>
<div class="t" style="left:1305.70px;top:364.53px;font-size:12.45px;color:#3270b0;font-weight:400;">Recent Events</div>
<div class="r" style="left:1296px;top:388px;width:286px;height:1.1999999999999886px;background:#41809a"></div>
<svg class="r" style="left:1509.5px;top:366px;filter:drop-shadow(0 1px 0.6px rgba(0,0,0,0.12))" width="20" height="11" viewBox="0 0 20 11"><rect x="1" y="1.2" width="16.2" height="8" rx="4" fill="#fff" stroke="#d6d6d6" stroke-width="1"/><circle cx="5.2" cy="5.4" r="4" fill="#fff" stroke="#c8c8c8" stroke-width="1"/></svg>
<div class="r" style="left:1528px;top:365px;width:50px;height:14px;background:#25a79b;border-radius:7px"></div>
<div class="t" style="left:1534.00px;top:363.10px;font-size:9.65px;color:#fff;font-weight:700;">Detail(s)</div>
<svg class="r" style="left:1326px;top:406px;" width="56" height="56" viewBox="0 0 56 56"><circle cx="28" cy="28" r="26.7" fill="#f7d6d6" stroke="#e0625e" stroke-width="1.2"/></svg>
<div class="t" style="left:1334.00px;width:40px;text-align:center;top:424.80px;font-size:14px;color:#e0625e;font-weight:400;">0</div>
<div class="t" style="left:1294.00px;width:120px;text-align:center;top:459.00px;font-size:11.4px;color:#555;font-weight:400;">Critical</div>
<svg class="r" style="left:1411px;top:406px;" width="56" height="56" viewBox="0 0 56 56"><circle cx="28" cy="28" r="26.7" fill="#fce9e9" stroke="#ef9a9a" stroke-width="1.2"/></svg>
<div class="t" style="left:1419.00px;width:40px;text-align:center;top:424.80px;font-size:14px;color:#e57373;font-weight:400;">0</div>
<div class="t" style="left:1379.00px;width:120px;text-align:center;top:459.00px;font-size:11.4px;color:#555;font-weight:400;">Major</div>
<svg class="r" style="left:1497px;top:406px;" width="56" height="56" viewBox="0 0 56 56"><circle cx="28" cy="28" r="26.7" fill="#fde3c6" stroke="#f0a14a" stroke-width="1.2"/></svg>
<div class="t" style="left:1505.00px;width:40px;text-align:center;top:424.80px;font-size:14px;color:#ee9a3a;font-weight:400;">0</div>
<div class="t" style="left:1465.00px;width:120px;text-align:center;top:459.00px;font-size:11.4px;color:#555;font-weight:400;">Minor</div>
<svg class="r" style="left:1368px;top:485px;" width="56" height="56" viewBox="0 0 56 56"><circle cx="28" cy="28" r="26.7" fill="#dcebf7" stroke="#a9c0d0" stroke-width="1.2"/></svg>
<div class="t" style="left:1376.00px;width:40px;text-align:center;top:503.80px;font-size:14px;color:#6c9ab0;font-weight:400;">0</div>
<div class="t" style="left:1336.00px;width:120px;text-align:center;top:538.00px;font-size:11.4px;color:#555;font-weight:400;">Indeterminate</div>
<svg class="r" style="left:1456px;top:485px;" width="56" height="56" viewBox="0 0 56 56"><circle cx="28" cy="28" r="26.7" fill="#faf6d3" stroke="#9c9868" stroke-width="1.2"/></svg>
<div class="t" style="left:1464.00px;width:40px;text-align:center;top:503.80px;font-size:14px;color:#6e6b4c;font-weight:400;">0</div>
<div class="t" style="left:1424.00px;width:120px;text-align:center;top:538.00px;font-size:11.4px;color:#555;font-weight:400;">Warning</div>
<div class="r" style="left:177px;top:673px;width:286.5px;height:67px;background:#fff;border-radius:3px;box-shadow:0 0 0 0.5px #e2e2e2"></div>
<div class="t" style="left:186.50px;top:679.67px;font-size:13.5px;color:#3270b0;font-weight:400;">Health Monitor</div>
<div class="r" style="left:177px;top:703px;width:286.5px;height:1.2000000000000455px;background:#41809a"></div>
<svg class="r" style="left:431px;top:681px;filter:drop-shadow(0 1px 0.6px rgba(0,0,0,0.12))" width="20" height="11" viewBox="0 0 20 11"><rect x="1" y="1.2" width="16.2" height="8" rx="4" fill="#fff" stroke="#d6d6d6" stroke-width="1"/><circle cx="5.2" cy="5.4" r="4" fill="#fff" stroke="#c8c8c8" stroke-width="1"/></svg>
<div class="t" style="left:186.50px;top:710.59px;font-size:11.7px;color:#555;font-weight:400;">Config Sync Status</div>
<div class="t" style="left:341.00px;top:706.84px;font-size:9.85px;color:#555;font-weight:400;">IN_SYNC</div>
<div class="r" style="left:478.5px;top:673px;width:286.0px;height:67px;background:#fff;border-radius:3px;box-shadow:0 0 0 0.5px #e2e2e2"></div>
<div class="t" style="left:488.00px;top:679.86px;font-size:12.94px;color:#3270b0;font-weight:400;">Policy Violations</div>
<div class="r" style="left:478.5px;top:703px;width:286.0px;height:1.2000000000000455px;background:#41809a"></div>
<svg class="r" style="left:733px;top:681px;filter:drop-shadow(0 1px 0.6px rgba(0,0,0,0.12))" width="20" height="11" viewBox="0 0 20 11"><rect x="1" y="1.2" width="16.2" height="8" rx="4" fill="#fff" stroke="#d6d6d6" stroke-width="1"/><circle cx="5.2" cy="5.4" r="4" fill="#fff" stroke="#c8c8c8" stroke-width="1"/></svg>
<div class="t" style="left:488.00px;top:710.16px;font-size:11.22px;color:#555;font-weight:400;">Packet drop no valid available link</div>
<svg class="r" style="left:706px;top:708px;" width="35" height="35" viewBox="0 0 35 35"><circle cx="17.5" cy="17.5" r="16" fill="#fff" stroke="#e8a277" stroke-width="1.3"/></svg>
<div class="t" style="left:708.50px;width:30px;text-align:center;top:713.64px;font-size:11px;color:#e07a4a;font-weight:400;">0</div>
<div class="r" style="left:779.5px;top:673px;width:587.5px;height:67px;background:#fff;border-radius:3px;box-shadow:0 0 0 0.5px #e2e2e2"></div>
<div class="t" style="left:789.00px;top:679.78px;font-size:13.17px;color:#3270b0;font-weight:400;">Appliance Activity</div>
<div class="r" style="left:779.5px;top:703px;width:587.5px;height:1.2000000000000455px;background:#41809a"></div>
<svg class="r" style="left:1299px;top:679px;" width="15" height="15" viewBox="0 0 15 15"><circle cx="7.5" cy="7.5" r="4.3" fill="none" stroke="#4a5f73" stroke-width="2.8"/><rect x="6.1" y="0.6" width="2.8" height="3.4" rx="0.6" fill="#4a5f73" transform="rotate(0 7.5 7.5)"/><rect x="6.1" y="0.6" width="2.8" height="3.4" rx="0.6" fill="#4a5f73" transform="rotate(45 7.5 7.5)"/><rect x="6.1" y="0.6" width="2.8" height="3.4" rx="0.6" fill="#4a5f73" transform="rotate(90 7.5 7.5)"/><rect x="6.1" y="0.6" width="2.8" height="3.4" rx="0.6" fill="#4a5f73" transform="rotate(135 7.5 7.5)"/><rect x="6.1" y="0.6" width="2.8" height="3.4" rx="0.6" fill="#4a5f73" transform="rotate(180 7.5 7.5)"/><rect x="6.1" y="0.6" width="2.8" height="3.4" rx="0.6" fill="#4a5f73" transform="rotate(225 7.5 7.5)"/><rect x="6.1" y="0.6" width="2.8" height="3.4" rx="0.6" fill="#4a5f73" transform="rotate(270 7.5 7.5)"/><rect x="6.1" y="0.6" width="2.8" height="3.4" rx="0.6" fill="#4a5f73" transform="rotate(315 7.5 7.5)"/></svg>
<div class="r" style="left:1313px;top:680px;width:50px;height:14px;background:#25a79b;border-radius:7px"></div>
<div class="t" style="left:1319.50px;top:678.10px;font-size:9.65px;color:#fff;font-weight:700;">Detail(s)</div>
<div class="r" style="left:1594px;top:155.5px;width:9.5px;height:576.5px;background:#a9bed4;border-radius:5px 5px 0 0"></div>
<svg class="r" style="left:0;top:0" width="1605" height="732" viewBox="0 0 1605 732"><line x1="1256.3" y1="114.7" x2="1388.7" y2="29.9" stroke="#000" stroke-width="4.6"/><polygon points="1400.1,22.6 1391.1,37.4 1382.9,24.6" fill="#000"/><line x1="1299.5" y1="176.4" x2="1429.4" y2="32.6" stroke="#000" stroke-width="4.6"/><polygon points="1438.4,22.6 1433.7,39.2 1422.4,29.0" fill="#000"/><line x1="1372.8" y1="215.2" x2="1471.0" y2="36.6" stroke="#000" stroke-width="4.6"/><polygon points="1477.5,24.8 1476.7,42.0 1463.4,34.7" fill="#000"/><line x1="1457.6" y1="246.8" x2="1525.1" y2="40.8" stroke="#000" stroke-width="4.6"/><polygon points="1529.3,28 1531.7,45.1 1517.3,40.4" fill="#000"/><line x1="1552.1" y1="254.1" x2="1560.9" y2="67.2" stroke="#000" stroke-width="4.6"/><polygon points="1561.5,53.7 1568.4,69.5 1553.2,68.8" fill="#000"/><circle cx="1222" cy="119.7" r="42.9" fill="#3cc4f1"/><path d="M1231.6,96 L1231.6,142 L1222.6,142 L1222.6,110.2 C1219.5,112.8 1214.8,115.4 1210.8,116.6 L1210.8,108 C1215.8,106 1220.6,101.5 1222.8,96 Z" fill="#000"/><circle cx="1275" cy="197.5" r="42.9" fill="#3cc4f1"/><text x="1275" y="219.3" font-size="63" font-weight="700" text-anchor="middle" font-family="Liberation Sans" fill="#000">2</text><circle cx="1360" cy="246" r="42.9" fill="#3cc4f1"/><text x="1360" y="267.8" font-size="63" font-weight="700" text-anchor="middle" font-family="Liberation Sans" fill="#000">3</text><circle cx="1451" cy="280" r="42.9" fill="#3cc4f1"/><text x="1451" y="301.8" font-size="63" font-weight="700" text-anchor="middle" font-family="Liberation Sans" fill="#000">4</text><circle cx="1549" cy="287" r="42.9" fill="#3cc4f1"/><text x="1549" y="308.8" font-size="63" font-weight="700" text-anchor="middle" font-family="Liberation Sans" fill="#000">5</text></svg>
<div class="r" style="left:1603px;top:1px;width:1px;height:56px;background:#abc0d5"></div>
<div class="r" style="left:0px;top:0px;width:1605px;height:1px;background:#000"></div>
<div class="r" style="left:0px;top:0px;width:1px;height:732px;background:#000"></div>
<div class="r" style="left:1604px;top:0px;width:1px;height:732px;background:#000"></div>
<div class="r" style="left:0px;top:731px;width:1605px;height:1px;background:#000"></div>
</body></html>
